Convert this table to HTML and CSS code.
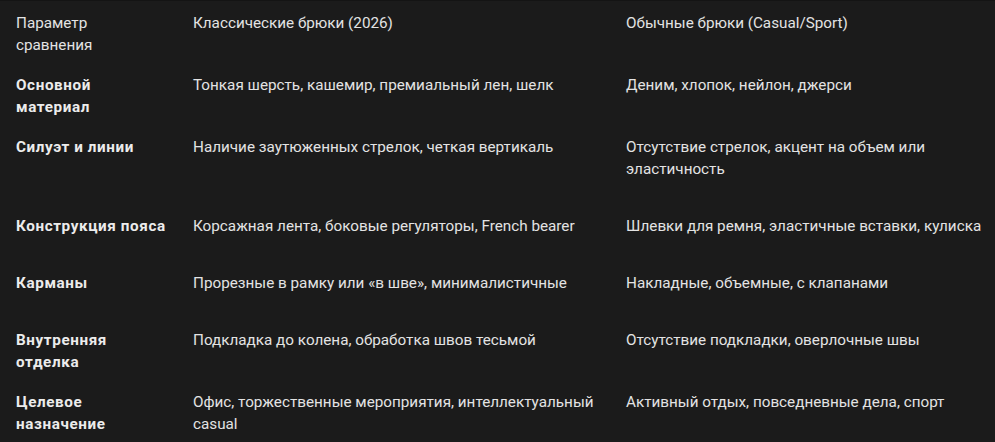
FILE: index.html
```html
<!DOCTYPE html>
<html lang="ru">
<head>
<meta charset="utf-8">
<title>Сравнение брюк</title>
<link rel="stylesheet" href="styles.css">
</head>
<body>
<div class="wrap">
<table class="cmp">
  <colgroup>
    <col class="c1">
    <col class="c2">
    <col class="c3">
  </colgroup>
  <thead>
    <tr>
      <th>Параметр сравнения</th>
      <th>Классические брюки (2026)</th>
      <th>Обычные брюки (Casual/Sport)</th>
    </tr>
  </thead>
  <tbody>
    <tr>
      <td><strong>Основной материал</strong></td>
      <td>Тонкая шерсть, кашемир, премиальный лен, шелк</td>
      <td>Деним, хлопок, нейлон, джерси</td>
    </tr>
    <tr>
      <td><strong>Силуэт и линии</strong></td>
      <td>Наличие заутюженных стрелок, четкая вертикаль</td>
      <td>Отсутствие стрелок, акцент на объем или эластичность</td>
    </tr>
    <tr>
      <td><strong>Конструкция пояса</strong></td>
      <td>Корсажная лента, боковые регуляторы, French bearer</td>
      <td>Шлевки для ремня, эластичные вставки, кулиска</td>
    </tr>
    <tr>
      <td><strong>Карманы</strong></td>
      <td>Прорезные в рамку или «в шве», минималистичные</td>
      <td>Накладные, объемные, с клапанами</td>
    </tr>
    <tr>
      <td><strong>Внутренняя отделка</strong></td>
      <td>Подкладка до колена, обработка швов тесьмой</td>
      <td>Отсутствие подкладки, оверлочные швы</td>
    </tr>
    <tr>
      <td><strong>Целевое назначение</strong></td>
      <td>Офис, торжественные мероприятия, интеллектуальный casual</td>
      <td>Активный отдых, повседневные дела, спорт</td>
    </tr>
  </tbody>
</table>
</div>
</body>
</html>
```
FILE: styles.css
```css
html, body {
  margin: 0;
  padding: 0;
  background: #1b1b1b;
}
body {
  font-family: Roboto, "Noto Sans", "Liberation Sans", sans-serif;
  font-size: 15.25px;
  line-height: 22px;
  color: #e3e3e3;
}
.wrap {
  border-top: 1px solid #141414;
  padding-top: 2px;
}
.cmp {
  width: 995px;
  border-collapse: collapse;
  table-layout: fixed;
}
.c1 { width: 177px; }
.c2 { width: 433px; }
.c3 { width: 385px; }
.cmp th,
.cmp td {
  text-align: left;
  vertical-align: top;
  font-weight: 400;
  padding: 9px 10px 9px 16px;
}
.cmp th:last-child,
.cmp td:last-child {
  padding-bottom: 26px;
}
.cmp strong {
  font-weight: 700;
  letter-spacing: 0.6px;
  color: #ececec;
}
```
